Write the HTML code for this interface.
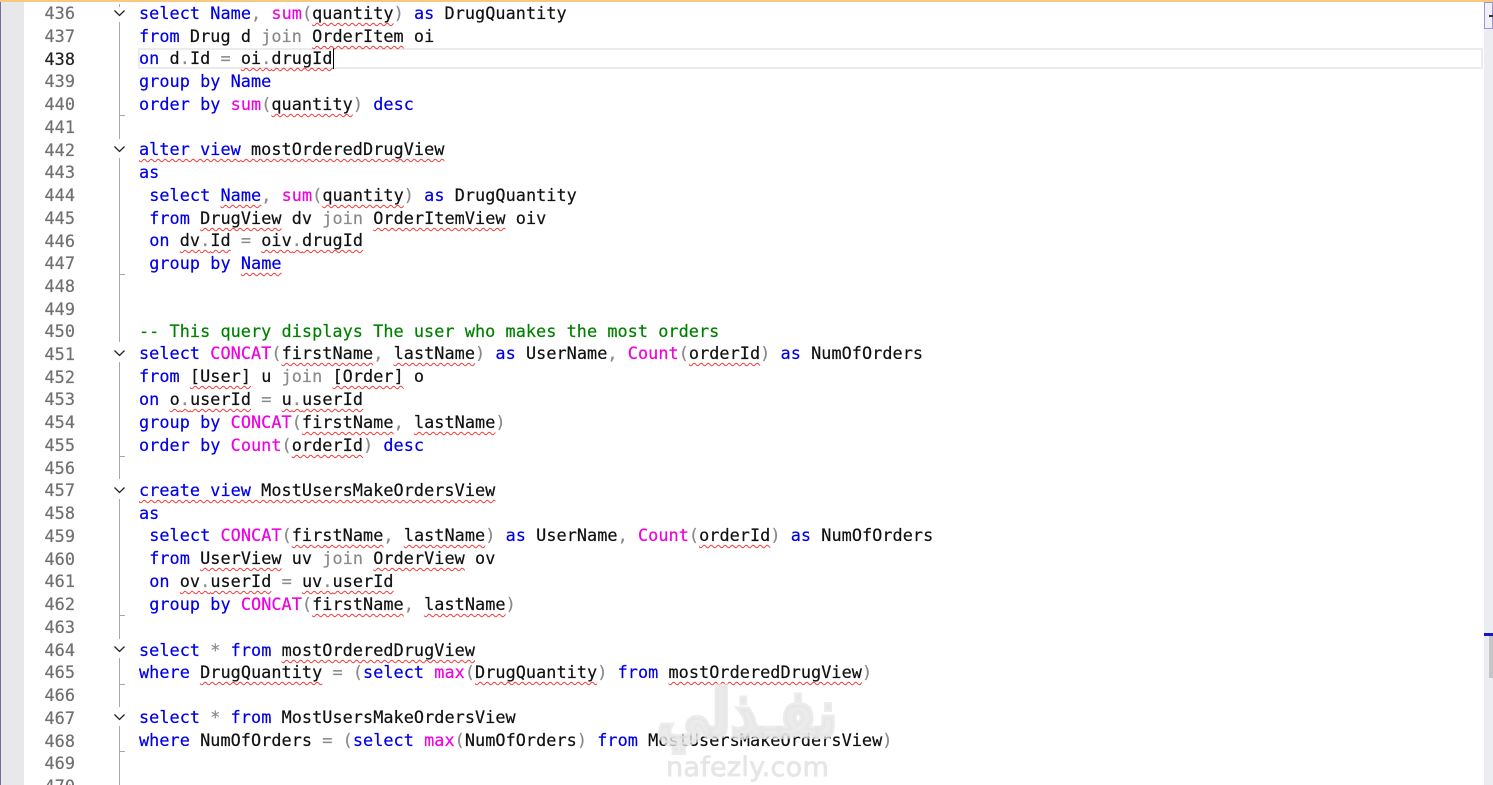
<!DOCTYPE html>
<html><head><meta charset="utf-8">
<style>
html,body{margin:0;padding:0;width:1493px;height:785px;overflow:hidden;background:#fff}
#w{position:relative;width:1493px;height:785px;overflow:hidden;font-family:"DejaVu Sans Mono","Liberation Mono",monospace;font-size:16.85px;letter-spacing:.04px;color:#111;-webkit-text-stroke:.2px}
.l,.n{position:absolute;height:23px;line-height:23px;white-space:pre;margin-top:1px}
.l{left:139px}
.n{left:30px;width:45px;text-align:right;color:#707070}
.k{color:#0000e6}.f{color:#f000e0}.g{color:#8a8a8a}.c{color:#008000}
.e{text-decoration:underline wavy #f23a3a;text-decoration-thickness:1px;text-underline-offset:3px;text-decoration-skip-ink:none}
.a{position:absolute}
</style></head><body><div id="w">
<div class="a" style="left:0;top:0;width:1493px;height:2px;background:#f6c980"></div>
<div class="a" style="left:0;top:2px;width:1px;height:783px;background:#6f6f9f"></div>
<div class="a" style="left:1px;top:2px;width:23px;height:783px;background:#e8e8ea"></div>
<div class="a" style="left:1484px;top:2px;width:9px;height:783px;background:#ecedf1"></div>
<div class="a" style="left:1484px;top:2px;width:9px;height:27px;box-sizing:border-box;border:1px solid #9a9ad0;background:#f0f0f6"></div>
<div class="a" style="left:1489px;top:15px;width:4px;height:2px;background:#333"></div>
<div class="a" style="left:1484px;top:633px;width:9px;height:3px;background:#1818c0"></div>
<div class="a" style="left:1489px;top:636px;width:4px;height:42px;background:#c6c6c8"></div>
<div class="a" style="left:138px;top:48px;width:1345px;height:21px;box-sizing:border-box;border:2px solid #ebebee;border-radius:1px"></div>
<div class="a" style="left:333px;top:48px;width:1px;height:21px;background:#000"></div>
<svg class="a" style="left:0;top:0" width="1493" height="785" fill="none">
<g stroke="#a8a8a8" stroke-width="1"><path d="M119.500 4V7M119.500 22V139M119.500 158V342M119.500 362V479M119.500 499V639M119.500 658V707M119.500 726V785"/>
<path d="M119 115.500H125M119 274.500H125M119 456.500H125M119 615.500H125M119 684.500H125M119 751.500H125"/></g>
<g stroke="#222" stroke-width="1.300"><path d="M114.500 10.500L119.500 15.500L124.500 10.500M114.500 146.500L119.500 151.500L124.500 146.500M114.500 350.500L119.500 355.500L124.500 350.500M114.500 487.500L119.500 492.500L124.500 487.500M114.500 646.500L119.500 651.500L124.500 646.500M114.500 714.500L119.500 719.500L124.500 714.500"/></g>
</svg>

<div class="n" style="top:1px">436</div><div class="l" style="top:1px"><span class="k">select</span> <span class="k">Name</span><span class="g">,</span> <span class="f">sum</span><span class="g">(</span><span class="e">quantity</span><span class="g">)</span> <span class="k">as</span> DrugQuantity</div>
<div class="n" style="top:24px">437</div><div class="l" style="top:24px"><span class="k">from</span> Drug d <span class="g">join</span> <span class="e">OrderItem</span> oi</div>
<div class="n" style="top:47px;color:#222">438</div><div class="l" style="top:46px"><span class="k">on</span> d<span class="g">.</span>Id <span class="g">=</span> <span class="e">oi<span class="g">.</span>drugId</span></div>
<div class="n" style="top:69px">439</div><div class="l" style="top:69px"><span class="k">group by Name</span></div>
<div class="n" style="top:92px">440</div><div class="l" style="top:92px"><span class="k">order by</span> <span class="f">sum</span><span class="g">(</span><span class="e">quantity</span><span class="g">)</span> <span class="k">desc</span></div>
<div class="n" style="top:115px">441</div>
<div class="n" style="top:138px">442</div><div class="l" style="top:137px"><span class="e"><span class="k">alter view</span> mostOrderedDrugView</span></div>
<div class="n" style="top:160px">443</div><div class="l" style="top:160px"><span class="k">as</span></div>
<div class="n" style="top:183px">444</div><div class="l" style="top:183px"> <span class="k">select</span> <span class="e"><span class="k">Name</span></span><span class="g">,</span> <span class="f">sum</span><span class="g">(</span><span class="e">quantity</span><span class="g">)</span> <span class="k">as</span> DrugQuantity</div>
<div class="n" style="top:206px">445</div><div class="l" style="top:206px"> <span class="k">from</span> <span class="e">DrugView</span> dv <span class="g">join</span> <span class="e">OrderItemView</span> oiv</div>
<div class="n" style="top:229px">446</div><div class="l" style="top:228px"> <span class="k">on</span> <span class="e">dv<span class="g">.</span>Id</span> <span class="g">=</span> <span class="e">oiv<span class="g">.</span>drugId</span></div>
<div class="n" style="top:251px">447</div><div class="l" style="top:251px"> <span class="k">group by</span> <span class="e"><span class="k">Name</span></span></div>
<div class="n" style="top:274px">448</div>
<div class="n" style="top:297px">449</div>
<div class="n" style="top:319px">450</div><div class="l" style="top:319px"><span class="c">-- This query displays The user who makes the most orders</span></div>
<div class="n" style="top:342px">451</div><div class="l" style="top:341px"><span class="k">select</span> <span class="f">CONCAT</span><span class="g">(</span><span class="e">firstName</span><span class="g">,</span> <span class="e">lastName</span><span class="g">)</span> <span class="k">as</span> UserName<span class="g">,</span> <span class="f">Count</span><span class="g">(</span><span class="e">orderId</span><span class="g">)</span> <span class="k">as</span> NumOfOrders</div>
<div class="n" style="top:365px">452</div><div class="l" style="top:364px"><span class="k">from</span> <span class="e">[User]</span> u <span class="g">join</span> <span class="e">[Order]</span> o</div>
<div class="n" style="top:387px">453</div><div class="l" style="top:387px"><span class="k">on</span> <span class="e">o<span class="g">.</span>userId</span> <span class="g">=</span> <span class="e">u<span class="g">.</span>userId</span></div>
<div class="n" style="top:410px">454</div><div class="l" style="top:410px"><span class="k">group by</span> <span class="f">CONCAT</span><span class="g">(</span><span class="e">firstName</span><span class="g">,</span> <span class="e">lastName</span><span class="g">)</span></div>
<div class="n" style="top:433px">455</div><div class="l" style="top:433px"><span class="k">order by</span> <span class="f">Count</span><span class="g">(</span><span class="e">orderId</span><span class="g">)</span> <span class="k">desc</span></div>
<div class="n" style="top:456px">456</div>
<div class="n" style="top:478px">457</div><div class="l" style="top:478px"><span class="e"><span class="k">create view</span> MostUsersMakeOrdersView</span></div>
<div class="n" style="top:501px">458</div><div class="l" style="top:501px"><span class="k">as</span></div>
<div class="n" style="top:524px">459</div><div class="l" style="top:523px"> <span class="k">select</span> <span class="f">CONCAT</span><span class="g">(</span><span class="e">firstName</span><span class="g">,</span> <span class="e">lastName</span><span class="g">)</span> <span class="k">as</span> UserName<span class="g">,</span> <span class="f">Count</span><span class="g">(</span><span class="e">orderId</span><span class="g">)</span> <span class="k">as</span> NumOfOrders</div>
<div class="n" style="top:547px">460</div><div class="l" style="top:546px"> <span class="k">from</span> <span class="e">UserView</span> uv <span class="g">join</span> <span class="e">OrderView</span> ov</div>
<div class="n" style="top:569px">461</div><div class="l" style="top:569px"> <span class="k">on</span> <span class="e">ov<span class="g">.</span>userId</span> <span class="g">=</span> <span class="e">uv<span class="g">.</span>userId</span></div>
<div class="n" style="top:592px">462</div><div class="l" style="top:592px"> <span class="k">group by</span> <span class="f">CONCAT</span><span class="g">(</span><span class="e">firstName</span><span class="g">,</span> <span class="e">lastName</span><span class="g">)</span></div>
<div class="n" style="top:615px">463</div>
<div class="n" style="top:638px">464</div><div class="l" style="top:638px"><span class="k">select</span> <span class="g">*</span> <span class="k">from</span> <span class="e">mostOrderedDrugView</span></div>
<div class="n" style="top:660px">465</div><div class="l" style="top:660px"><span class="k">where</span> <span class="e">DrugQuantity</span> <span class="g">=</span> <span class="g">(</span><span class="k">select</span> <span class="f">max</span><span class="g">(</span><span class="e">DrugQuantity</span><span class="g">)</span> <span class="k">from</span> <span class="e">mostOrderedDrugView</span><span class="g">)</span></div>
<div class="n" style="top:683px">466</div>
<div class="n" style="top:706px">467</div><div class="l" style="top:705px"><span class="k">select</span> <span class="g">*</span> <span class="k">from</span> MostUsersMakeOrdersView</div>
<div class="n" style="top:729px">468</div><div class="l" style="top:728px"><span class="k">where</span> NumOfOrders <span class="g">=</span> <span class="g">(</span><span class="k">select</span> <span class="f">max</span><span class="g">(</span>NumOfOrders<span class="g">)</span> <span class="k">from</span> MostUsersMakeOrdersView<span class="g">)</span></div>
<div class="n" style="top:751px">469</div>
<div class="n" style="top:774px">470</div>

<div class="a" style="left:656px;top:680px;width:182px;height:70px;line-height:70px;text-align:center;font-family:'DejaVu Sans',sans-serif;font-weight:bold;font-size:53px;letter-spacing:0;color:rgba(230,230,230,.8);-webkit-text-stroke:4px rgba(230,230,230,.75);transform:scaleY(1.25)" dir="rtl">نفـذلي</div>
<div class="a" style="left:660px;top:751px;width:175px;line-height:34px;text-align:center;font-family:'DejaVu Sans',sans-serif;font-size:27px;letter-spacing:.3px;color:#e6e6e6;-webkit-text-stroke:.8px #e6e6e6">nafezly.com</div>
</div></body></html>
